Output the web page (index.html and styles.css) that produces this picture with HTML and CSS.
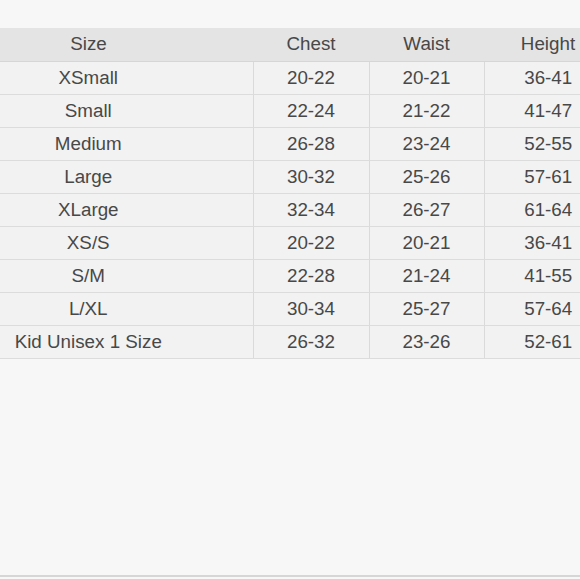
FILE: index.html
```html
<!DOCTYPE html>
<html>
<head>
<meta charset="utf-8">
<link rel="stylesheet" href="styles.css">
</head>
<body>
<div class="page">
  <table class="sizes">
    <colgroup>
      <col class="w-size"><col class="w-chest"><col class="w-waist"><col class="w-height">
    </colgroup>
    <thead>
      <tr><th>Size</th><th>Chest</th><th>Waist</th><th>Height</th></tr>
    </thead>
    <tbody>
      <tr><td>XSmall</td><td>20-22</td><td>20-21</td><td>36-41</td></tr>
      <tr><td>Small</td><td>22-24</td><td>21-22</td><td>41-47</td></tr>
      <tr><td>Medium</td><td>26-28</td><td>23-24</td><td>52-55</td></tr>
      <tr><td>Large</td><td>30-32</td><td>25-26</td><td>57-61</td></tr>
      <tr><td>XLarge</td><td>32-34</td><td>26-27</td><td>61-64</td></tr>
      <tr><td>XS/S</td><td>20-22</td><td>20-21</td><td>36-41</td></tr>
      <tr><td>S/M</td><td>22-28</td><td>21-24</td><td>41-55</td></tr>
      <tr><td>L/XL</td><td>30-34</td><td>25-27</td><td>57-64</td></tr>
      <tr><td>Kid Unisex 1 Size</td><td>26-32</td><td>23-26</td><td>52-61</td></tr>
    </tbody>
  </table>
</div>
</body>
</html>
```
FILE: styles.css
```css
html, body {
  margin: 0;
  padding: 0;
  background: #f7f7f7;
  overflow: hidden;
}
.page {
  height: 577px;
  border-bottom: 2px solid #d6d6d6;
  padding-top: 28px;
  box-sizing: border-box;
  overflow: hidden;
}
.sizes {
  margin-left: -76px;
  border-collapse: collapse;
  table-layout: fixed;
  width: 688px;
  font-family: "Liberation Sans", Arial, sans-serif;
  font-size: 18.8px;
  color: #484848;
}
.w-size { width: 329px; }
.w-chest { width: 116px; }
.w-waist { width: 115px; }
.w-height { width: 128px; }
.sizes th, .sizes td {
  height: 33px;
  padding: 0;
  text-align: center;
  font-weight: normal;
  box-sizing: border-box;
}
.sizes th {
  background: #e4e4e4;
  border-bottom: 1px solid #d6d6d6;
}
.sizes td {
  background: #f2f2f2;
  border-bottom: 1px solid #dcdcdc;
  border-top: 1px solid #fafafa;
}
.sizes td + td {
  border-left: 1px solid #dadada;
}
```
